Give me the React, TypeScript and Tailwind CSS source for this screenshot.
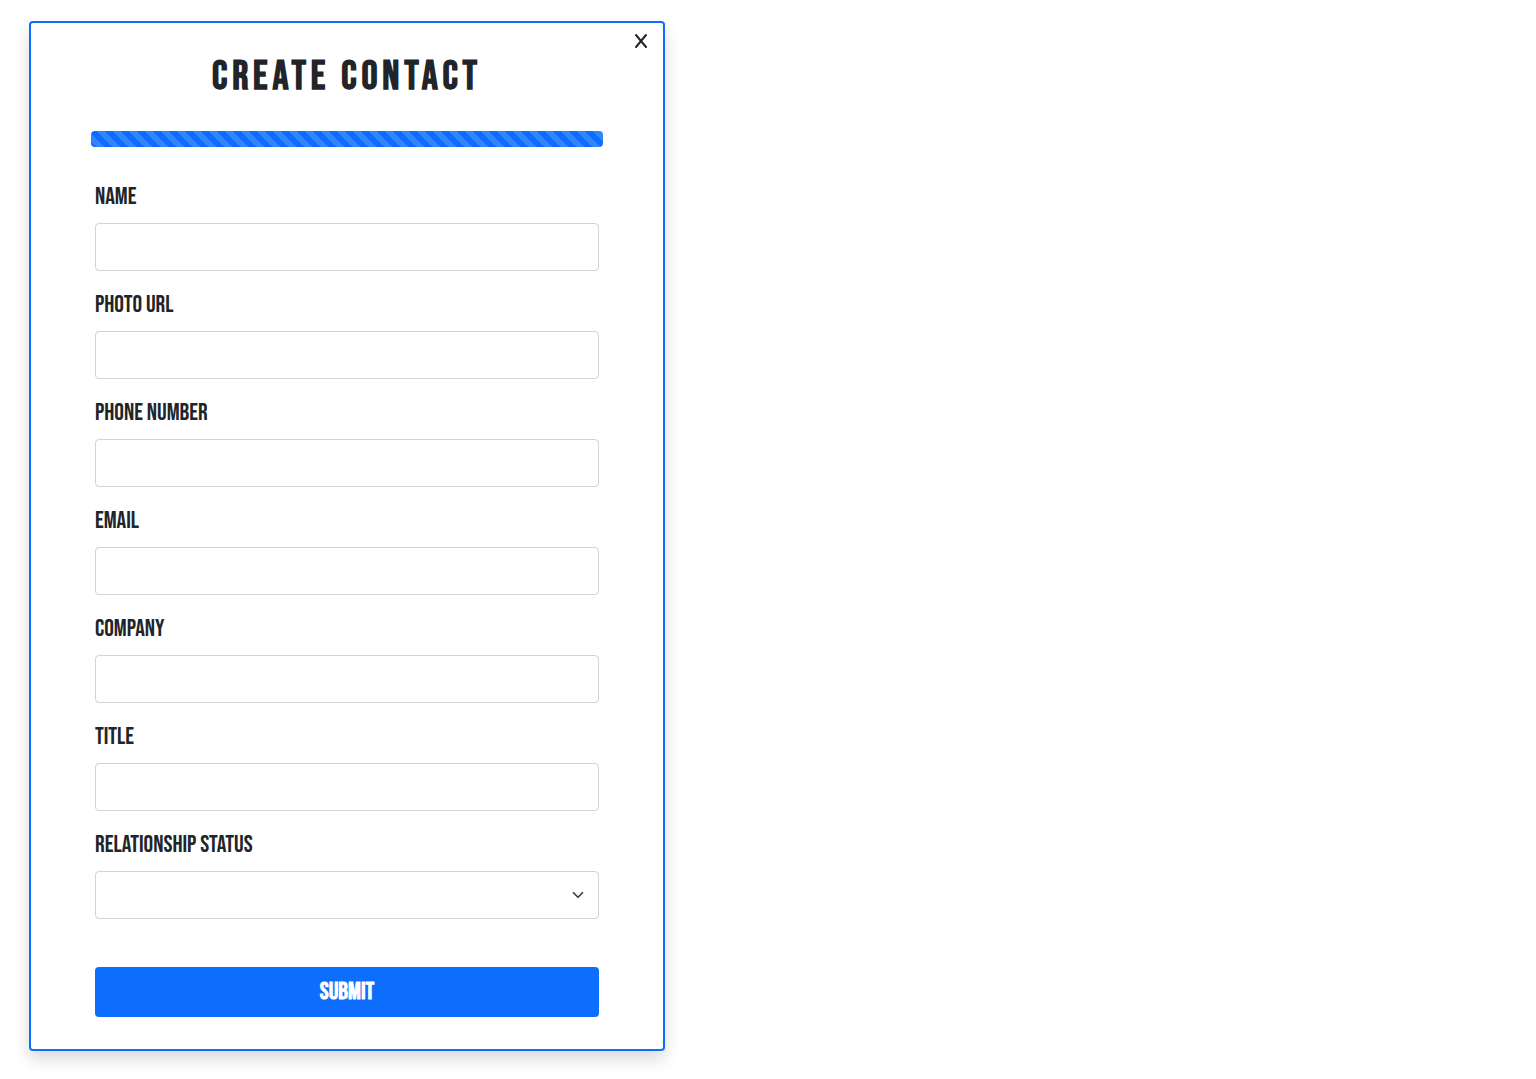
import { useId } from "react";

const fields = [
  { label: "NAME", type: "text" },
  { label: "PHOTO URL", type: "text" },
  { label: "PHONE NUMBER", type: "tel" },
  { label: "EMAIL", type: "email" },
  { label: "COMPANY", type: "text" },
  { label: "TITLE", type: "text" },
];

const controlClass =
  "block h-12 w-full rounded border border-[#ced4da] bg-white px-4 text-2xl text-[#212529] outline-none focus:border-[#86b7fe]";
const labelClass = "mb-2 block text-2xl leading-9";

function TextField({ label, type }: { label: string; type: string }) {
  const id = useId();
  return (
    <div>
      <label htmlFor={id} className={labelClass}>
        {label}
      </label>
      <input id={id} type={type} className={controlClass} />
    </div>
  );
}

function RelationshipField() {
  const id = useId();
  return (
    <div>
      <label htmlFor={id} className={labelClass}>
        RELATIONSHIP STATUS
      </label>
      <div className="relative">
        <select id={id} defaultValue="" className={`${controlClass} appearance-none`}>
          <option value=""></option>
        </select>
        <svg
          viewBox="0 0 16 16"
          className="pointer-events-none absolute top-1/2 right-[15px] h-3 w-3 -translate-y-1/2"
          fill="none"
          stroke="#343a40"
          strokeWidth="2.2"
          strokeLinecap="round"
          strokeLinejoin="round"
          aria-hidden="true"
        >
          <path d="M2 5l6 6 6-6" />
        </svg>
      </div>
    </div>
  );
}

export default function App() {
  return (
    <main className="bg-white px-[29px] pt-[21px] pb-7 font-['Bebas_Neue','Liberation_Sans_Narrow','Liberation_Sans',sans-serif] text-[#212529]">
      <section className="relative w-full max-w-[636px] rounded border-2 border-[#0d6efd] bg-white px-[60px] pt-8 pb-8 shadow-[0_8px_16px_rgba(0,0,0,0.15)]">
        <button type="button" aria-label="Close" className="absolute top-2 right-3 flex h-5 w-5 items-center justify-center">
          <svg viewBox="0 0 14 16" className="h-4 w-3.5" fill="none" stroke="#212529" strokeWidth="2" strokeLinecap="round" aria-hidden="true">
            <path d="M2 2l10 12M12 2l-10 12" />
          </svg>
        </button>
        <h1 className="text-center text-[40px] leading-11 font-bold tracking-[0.12em]">CREATE CONTACT</h1>
        <div
          role="progressbar"
          aria-label="Form progress"
          aria-valuenow={100}
          className="mt-8 h-4 rounded bg-[#0d6efd] bg-[linear-gradient(45deg,rgba(255,255,255,0.15)_25%,transparent_25%,transparent_50%,rgba(255,255,255,0.15)_50%,rgba(255,255,255,0.15)_75%,transparent_75%,transparent)] bg-[length:16px_16px] bg-[position:5px_0]"
        />
        <form className="mt-8 px-1" onSubmit={(e) => e.preventDefault()}>
          <div className="flex flex-col gap-4">
            {fields.map((f) => (
              <TextField key={f.label} {...f} />
            ))}
            <RelationshipField />
          </div>
          <button type="submit" className="mt-12 h-[50px] w-full rounded bg-[#0d6efd] text-2xl font-bold text-white">
            SUBMIT
          </button>
        </form>
      </section>
    </main>
  );
}
